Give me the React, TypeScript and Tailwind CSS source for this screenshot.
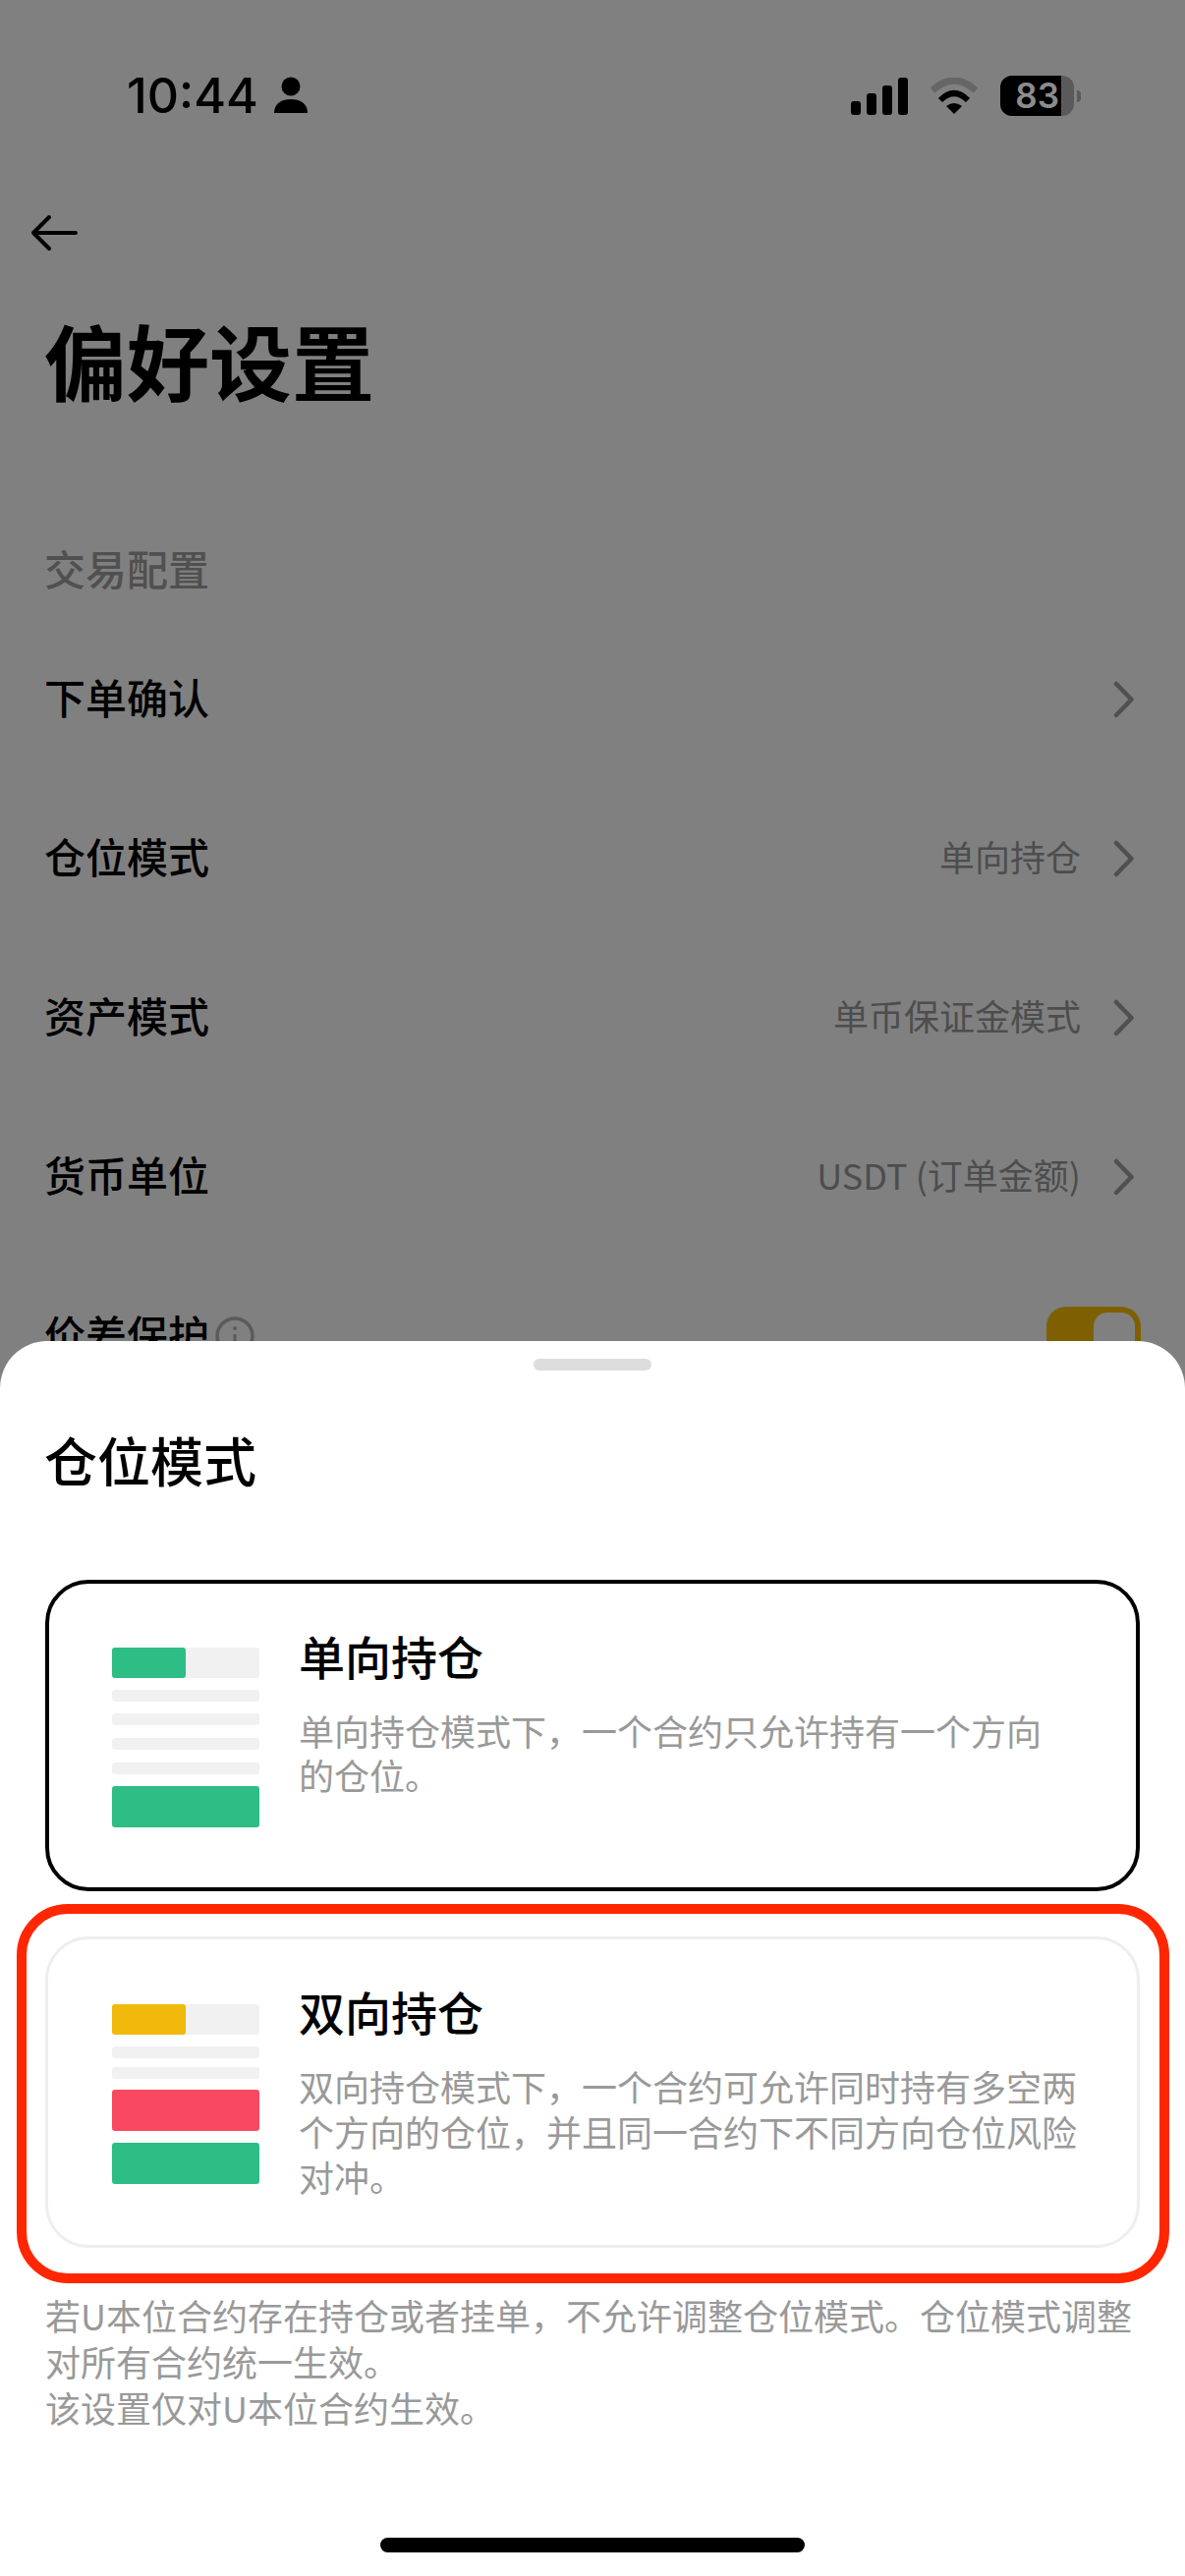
import React from "react";

function Chevron() {
  return (
    <svg width="24" height="38" viewBox="0 0 24 38" fill="none" className="shrink-0">
      <path d="M4 3 L19.5 19 L4 35" stroke="#505050" strokeWidth="4.5" strokeLinecap="round" strokeLinejoin="round" />
    </svg>
  );
}

function Row({ label, value }: { label: string; value?: string }) {
  return (
    <div className="flex h-[162px] items-center justify-between">
      <span className="pb-[8px] text-[42px] font-medium text-black">{label}</span>
      <div className="flex items-center gap-[32px]">
        {value && <span className="pb-[6px] text-[36px] text-[#4d4d4d]">{value}</span>}
        <Chevron />
      </div>
    </div>
  );
}

function Bar({ cls }: { cls: string }) {
  return <div className={cls} />;
}

function Card({ title, desc, children, cls, descCls }: { title: string; desc: string; children: React.ReactNode; cls: string; descCls: string }) {
  return (
    <div className={cls}>
      <div className="flex w-[150px] shrink-0 flex-col">{children}</div>
      <div className="ml-[40px] flex-1">
        <div className="text-[47px] leading-[60px] font-medium text-black">{title}</div>
        <div className={descCls}>{desc}</div>
      </div>
    </div>
  );
}

export default function App() {
  return (
    <div className="relative h-[2622px] w-[1206px] overflow-hidden bg-[#808080] font-['Noto_Sans_CJK_SC',sans-serif]">
      <div className="flex h-[190px] items-start justify-between pt-[72px] pr-[106px] pl-[129px]">
        <div className="flex items-center gap-[16px] font-['Inter',sans-serif]">
          <span className="text-[50px] leading-[50px] font-medium text-black">10:44</span>
          <svg width="34" height="38" viewBox="0 0 34 38" fill="black">
            <circle cx="17" cy="10" r="9.5" />
            <path d="M0 37 C0 27 8 23 17 23 C26 23 34 27 34 37 Z" />
          </svg>
        </div>
        <div className="mt-[5px] flex items-center gap-[22px]">
          <svg width="58" height="38" viewBox="0 0 58 38" fill="black">
            <rect x="0" y="24" width="10" height="14" rx="3" />
            <rect x="16" y="16" width="10" height="22" rx="3" />
            <rect x="32" y="8" width="10" height="30" rx="3" />
            <rect x="48" y="0" width="10" height="38" rx="3" />
          </svg>
          <svg width="50" height="38" viewBox="0 0 50 38" fill="none">
            <path d="M3 13 Q25 -7 47 13" stroke="#666666" strokeWidth="7" />
            <path d="M11 23 Q25 9 39 23" stroke="black" strokeWidth="6" />
            <path d="M17 29 Q25 23 33 29 L25 37 Z" fill="black" />
          </svg>
          <div className="flex items-center gap-[3px]">
            <div className="flex h-[41px] w-[75px] overflow-hidden rounded-[12px] bg-[#5a5a5a]">
              <div className="flex w-[62px] items-center justify-end bg-black pr-[2px] font-['Inter',sans-serif] text-[35px] leading-none font-semibold text-[#8c8c8c]">83</div>
            </div>
            <div className="h-[12px] w-[4px] rounded-r-full bg-[#5a5a5a]" />
          </div>
        </div>
      </div>

      <div className="pr-[50px] pl-[45px]">
        <svg width="48" height="38" viewBox="0 0 48 38" fill="none" className="mt-[28px] -ml-[14px]">
          <path d="M46 19 H3 M19 3 L3 19 L19 35" stroke="black" strokeWidth="4" strokeLinecap="round" strokeLinejoin="round" />
        </svg>
        <div className="mt-[55px] text-[84px] leading-[110px] font-bold text-black">偏好设置</div>
        <div className="mt-[127px] text-[42px] leading-[60px] font-medium text-[#505050]">交易配置</div>
        <div className="mt-[23px]">
          <Row label="下单确认" />
          <Row label="仓位模式" value="单向持仓" />
          <Row label="资产模式" value="单币保证金模式" />
          <Row label="货币单位" value="USDT (订单金额)" />
          <div className="-mr-[5px] flex h-[162px] items-center justify-between">
            <div className="flex items-center gap-[6px]">
              <span className="pb-[8px] text-[42px] font-medium text-black">价差保护</span>
              <svg width="40" height="40" viewBox="0 0 40 40" fill="none">
                <circle cx="20" cy="20" r="18" stroke="#5a5a5a" strokeWidth="3.5" />
                <path d="M20 18 V30" stroke="#5a5a5a" strokeWidth="3" />
                <circle cx="20" cy="12" r="2" fill="#5a5a5a" />
              </svg>
            </div>
            <div className="flex h-[60px] w-[96px] justify-end rounded-[20px] bg-[#7f6000] p-[6px]">
              <div className="h-[48px] w-[42px] rounded-[14px] bg-[#808080]" />
            </div>
          </div>
        </div>
      </div>

      <div className="absolute inset-x-0 bottom-0 h-[1257px] rounded-t-[48px] bg-white px-[46px]">
        <div className="mx-auto mt-[18px] h-[12px] w-[120px] rounded-[6px] bg-[#dddddd]" />
        <div className="mt-[52px] -ml-[1px] text-[54px] leading-[78px] font-medium text-black">仓位模式</div>
        <Card
          title="单向持仓"
          desc={"单向持仓模式下\uFF0C一个合约只允许持有一个方向的仓位。"}
          cls="mt-[83px] flex h-[317px] w-[1114px] rounded-[44px] border-[4px] border-black pt-[43px] pr-[75px] pl-[64px]"
          descCls="mt-[24px] text-[36px] leading-[45px] text-[#999999]"
        >
          <div className="mt-[22px] h-[31px] rounded-[3px] bg-[#f1f1f1]">
            <div className="h-full w-[75px] rounded-[3px] bg-[#2ebd85]" />
          </div>
          <Bar cls="mt-[12px] h-[12px] rounded-[3px] bg-[#f1f1f1]" />
          <Bar cls="mt-[12px] h-[12px] rounded-[3px] bg-[#f1f1f1]" />
          <Bar cls="mt-[13px] h-[12px] rounded-[3px] bg-[#f1f1f1]" />
          <Bar cls="mt-[13px] h-[12px] rounded-[3px] bg-[#f1f1f1]" />
          <Bar cls="mt-[12px] h-[42px] rounded-[3px] bg-[#2ebd85]" />
        </Card>
        <Card
          title="双向持仓"
          desc={"双向持仓模式下\uFF0C一个合约可允许同时持有多空两个方向的仓位\uFF0C并且同一合约下不同方向仓位风险对冲。"}
          cls="mt-[46px] flex h-[317px] w-[1114px] rounded-[44px] border-[3px] border-[#eeeeee] pt-[43px] pr-[45px] pl-[65px]"
          descCls="mt-[23px] text-[36px] leading-[46px] text-[#999999]"
        >
          <div className="mt-[23px] h-[31px] rounded-[3px] bg-[#f1f1f1]">
            <div className="h-full w-[75px] rounded-[3px] bg-[#f0b90b]" />
          </div>
          <Bar cls="mt-[12px] h-[12px] rounded-[3px] bg-[#f1f1f1]" />
          <Bar cls="mt-[9px] h-[12px] rounded-[3px] bg-[#f1f1f1]" />
          <Bar cls="mt-[11px] h-[42px] rounded-[3px] bg-[#f84960]" />
          <Bar cls="mt-[12px] h-[42px] rounded-[3px] bg-[#2ebd85]" />
        </Card>
        <div className="mt-[45px] w-[1114px] text-[36px] leading-[47px] text-[#999999]">
          <div>{"若U本位合约存在持仓或者挂单\uFF0C不允许调整仓位模式。仓位模式调整对所有合约统一生效。"}</div>
          <div>该设置仅对U本位合约生效。</div>
        </div>
      </div>

      <div className="absolute top-[1938px] left-[17px] h-[386px] w-[1173px] rounded-[52px] border-[10px] border-[#ff2600]" />
      <div className="absolute bottom-[24px] left-[387px] h-[15px] w-[432px] rounded-full bg-black" />
    </div>
  );
}
